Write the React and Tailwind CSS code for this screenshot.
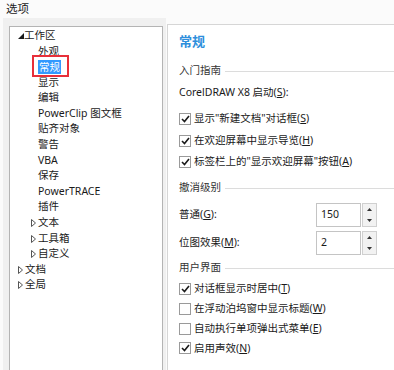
import React from 'react';

const font = { fontFamily: '"Noto Sans", "Noto Sans CJK SC", sans-serif' };

function Expanded() {
  return (
    <svg width="6" height="6" viewBox="0 0 6 6" className="block">
      <path d="M6 0 L6 6 L0 6 Z" fill="#1a1a1a" />
    </svg>
  );
}

function Collapsed() {
  return (
    <svg width="5" height="8" viewBox="0 0 5 8" className="block">
      <path d="M0.5 0.5 L4.5 4 L0.5 7.5 Z" fill="none" stroke="#555" strokeWidth="1" />
    </svg>
  );
}

const tree = [
  { label: '工作区', level: 0, open: true },
  { label: '外观', level: 2 },
  { label: '常规', level: 2, selected: true },
  { label: '显示', level: 2 },
  { label: '编辑', level: 2 },
  { label: 'PowerClip 图文框', level: 2 },
  { label: '贴齐对象', level: 2 },
  { label: '警告', level: 2 },
  { label: 'VBA', level: 2 },
  { label: '保存', level: 2 },
  { label: 'PowerTRACE', level: 2 },
  { label: '插件', level: 2 },
  { label: '文本', level: 1 },
  { label: '工具箱', level: 1 },
  { label: '自定义', level: 1 },
  { label: '文档', level: 0 },
  { label: '全局', level: 0 },
];

function TreeRow({ item }) {
  if (item.level === 2) {
    return (
      <div className="relative flex h-[15.6px] items-center pl-[28px]">
        {item.selected ? (
          <>
            <span className="bg-[#3399ff] px-px leading-[14px] text-white">{item.label}</span>
            <div className="absolute left-[22px] top-[-4px] h-[22px] w-[37px] border-2 border-[#e8303a]" />
          </>
        ) : (
          <span>{item.label}</span>
        )}
      </div>
    );
  }
  const pad = item.level === 0 ? 'pl-[8px]' : 'pl-[21px]';
  return (
    <div className={`flex h-[15.6px] items-center ${pad}`}>
      <div className="flex w-[7px] items-center">
        {item.open ? <Expanded /> : <Collapsed />}
      </div>
      <span className={item.open ? 'ml-[-1px]' : ''}>{item.label}</span>
    </div>
  );
}

function Check({ checked }) {
  return (
    <div className="flex h-[12px] w-[12px] items-center justify-center border border-[#9a9a9a] bg-white">
      {checked && (
        <svg width="9" height="8" viewBox="0 0 9 8">
          <path d="M1 4 L3.5 6.5 L8 1" fill="none" stroke="#1a1a1a" strokeWidth="1.6" />
        </svg>
      )}
    </div>
  );
}

function CheckRow({ checked, text, k, rest = ')', h = 'h-[20px]', mt = '' }) {
  return (
    <div className={`flex items-center ${h} ${mt}`}>
      <Check checked={checked} />
      <span className="ml-[3px]">
        {text}(<u>{k}</u>{rest}
      </span>
    </div>
  );
}

function Group({ title, mt }) {
  return (
    <div className={`flex h-[20px] items-center ${mt}`}>
      <span className="text-[#333]">{title}</span>
      <div className="ml-[4px] h-px flex-1 bg-[#dcdcdc]" />
    </div>
  );
}

function Spinner({ value }) {
  return (
    <div className="flex h-[24px]">
      <div className="flex w-[45px] items-center border border-[#c4c4c4] bg-white pl-[4px]">{value}</div>
      <div className="ml-px flex w-[15px] flex-col border border-[#d0d0d0] bg-[#f2f2f2]">
        <div className="flex flex-1 items-center justify-center">
          <svg width="5" height="3" viewBox="0 0 5 3"><path d="M2.5 0 L5 3 L0 3 Z" fill="#333" /></svg>
        </div>
        <div className="flex flex-1 items-center justify-center">
          <svg width="5" height="3" viewBox="0 0 5 3"><path d="M0 0 L5 0 L2.5 3 Z" fill="#333" /></svg>
        </div>
      </div>
    </div>
  );
}

export default function App() {
  return (
    <div className="flex h-[370px] w-[394px] flex-col overflow-hidden bg-[#fbfbfb] text-[10.5px] text-[#1a1a1a]" style={font}>
      <div className="flex h-[18px] items-center pl-[6px] text-[11.5px]">选项</div>
      <div className="flex flex-1">
        <div className="ml-[3px] flex w-[163px] flex-col bg-[#f0f0f0] pl-[6px] pr-[3px] pt-[8px]">
          <div className="flex-1 border border-b-0 border-[#b4b4b4] bg-white pt-px">
            {tree.map((item) => (
              <TreeRow key={item.label} item={item} />
            ))}
          </div>
        </div>
        <div className="ml-px mt-[6px] flex-1 border border-b-0 border-r-0 border-[#d6d6d6] bg-white pl-[11px]">
          <div className="mt-[7px] flex h-[20px] items-center text-[13px] font-bold text-[#2e8fdc]">常规</div>
          <Group title="入门指南" mt="mt-[9px]" />
          <div className="mt-[2px] flex h-[20px] items-center">
            <span>
              CorelDRAW X8 启动(<u>S</u>):
            </span>
          </div>
          <CheckRow checked text={'显示"新建文档"对话框'} k="S" mt="mt-[6px]" />
          <CheckRow checked text="在欢迎屏幕中显示导览" k="H" mt="mt-[2px]" />
          <CheckRow checked text={'标签栏上的"显示欢迎屏幕"按钮'} k="A" mt="mt-px" />
          <Group title="撤消级别" mt="mt-[6px]" />
          <div className="mt-[5px] flex items-center">
            <span className="w-[137px]">
              普通(<u>G</u>):
            </span>
            <Spinner value="150" />
          </div>
          <div className="mt-[4px] flex items-center">
            <span className="w-[137px]">
              位图效果(<u>M</u>):
            </span>
            <Spinner value="2" />
          </div>
          <Group title="用户界面" mt="mt-[3px]" />
          <CheckRow checked text="对话框显示时居中" k="T" h="h-[19.7px]" mt="mt-[1.5px]" />
          <CheckRow checked={false} text="在浮动泊坞窗中显示标题" k="W" h="h-[19.7px]" />
          <CheckRow checked={false} text="自动执行单项弹出式菜单" k="E" h="h-[19.7px]" />
          <CheckRow checked text="启用声效" k="N" h="h-[19.7px]" />
        </div>
      </div>
    </div>
  );
}
